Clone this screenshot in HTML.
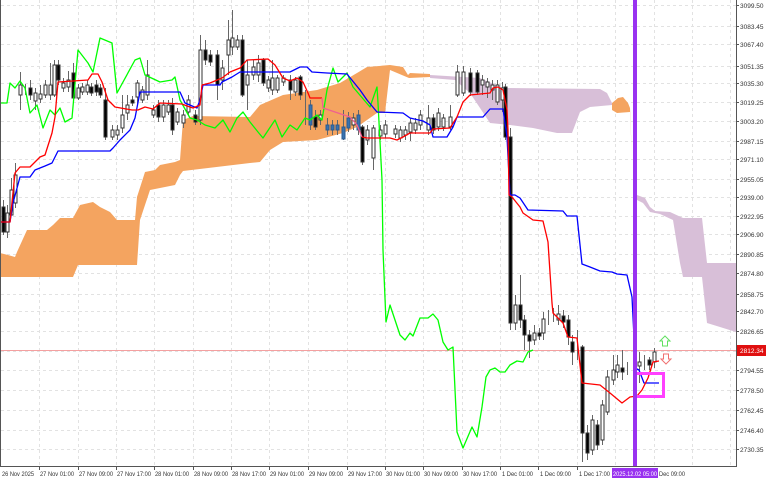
<!DOCTYPE html>
<html><head><meta charset="utf-8"><style>
html,body{margin:0;padding:0;background:#fff;width:768px;height:480px;overflow:hidden}
svg{display:block;font-family:"Liberation Sans",sans-serif}
</style></head><body>
<svg width="768" height="480" viewBox="0 0 768 480" xmlns="http://www.w3.org/2000/svg">
<rect width="768" height="480" fill="#fff"/>
<g stroke="#e2e2e2" stroke-width="1" stroke-dasharray="3,3">
<path d="M1 5.5H736M1 26.5H736M1 44.5H736M1 66.5H736M1 83.5H736M1 102.5H736M1 121.5H736M1 141.5H736M1 159.5H736M1 179.5H736M1 197.5H736M1 216.5H736M1 234.5H736M1 254.5H736M1 273.5H736M1 294.5H736M1 311.5H736M1 331.5H736M1 351.5H736M1 370.5H736M1 390.5H736M1 410.5H736M1 430.5H736M1 449.5H736"/>
<path d="M39.5 0V466M78.5 0V466M116.5 0V466M154.5 0V466M193.5 0V466M231.5 0V466M269.5 0V466M308.5 0V466M347.5 0V466M385.5 0V466M423.5 0V466M462.5 0V466M500.5 0V466M538.5 0V466M577.5 0V466M615.5 0V466M654.5 0V466M692.5 0V466M730.5 0V466"/>
</g>
<polygon fill="#f4a460" points="0,253 8,255 15,257 17,252 27,230 47,230 53,225 60,218 73,218 80,205 93,202 100,207 110,212 117,220 135,220 137,197 145,172 155,170 160,165 175,162 180,160 183,120 193,116 250,117 260,105 283,95 317,90 340,83 357,73 367,67 390,65 403,67 408,75 410,73 430,74 430,77 409,78 390,70 385,113 377,113 357,127 343,133 317,140 283,142 270,150 260,162 250,163 183,171 180,175 175,185 150,190 140,220 137,265 78,265 73,277 0,277"/>
<polygon fill="#d8bfd8" points="430,75 480,78 503,88 600,89 607,93 612,103 612,105 590,107 580,112 572,133 557,133 533,128 510,125 490,123 470,93 455,80 430,78"/>
<polygon fill="#f4a460" points="612,103 618,98 623,97 628,103 630,108 632,160 630,112 617,113 612,110"/>
<polygon fill="#d8bfd8" points="637,195 645,198 650,207 655,211 670,212 683,218 702,218 707,263 736,263 736,332 720,327 707,323 702,277 683,277 680,263 673,220 660,214 650,212 643,203 637,200"/>
<line x1="0" y1="350.5" x2="736" y2="350.5" stroke="#f4a0a0" stroke-width="1"/>
<g stroke="#666" stroke-width="1">
<path d="M3.5 200V235M7.5 205V238M11.5 178V215M15.5 163V208M20.5 72V110M25.5 84V95M30.5 80V100M35.5 88V110M40.5 85V103M45.5 80V98M50.5 63V100M54.5 60V97M58.5 60V85M63.5 78V92M68.5 71V92M73.5 63V100M78.5 84V100M82.5 83V95M87.5 80V95M91.5 83V96M96.5 80V96M100.5 84V98M105.5 88V140M112.5 125V140M117.5 125V140M122.5 95V133M127.5 95V120M132.5 96V106M137.5 80V105M142.5 86V103M147.5 60V100M153.5 105V118M158.5 100V122M163.5 100V122M168.5 100V115M172.5 98V135M177.5 108V125M183.5 110V128M188.5 95V115M195.5 110V125M200.5 35V125M205.5 40V65M210.5 50V66M217.5 50V100M222.5 60V90M228.5 20V75M232.5 10V55M237.5 35V50M242.5 35V97M247.5 60V110M253.5 60V80M258.5 55V82M263.5 58V86M268.5 76V92M272.5 60V95M277.5 75V93M283.5 75V86M290.5 75V100M295.5 77V96M300.5 75V100M305.5 90V125M310.5 100V130M315.5 110V130M320.5 110V125M327.5 118V135M332.5 120V135M337.5 120V135M343.5 110V140M348.5 112V132M353.5 113V130M358.5 110V135M362.5 125V165M367.5 125V145M373.5 125V170M380.5 125V140M385.5 120V138M395.5 125V138M400.5 126V142M405.5 126V140M410.5 118V141M415.5 118V134M420.5 110V130M428.5 105V135M433.5 114V134M438.5 108V131M443.5 114V131M450.5 105V130M457.5 65V97M463.5 66V96M470.5 68V96M477.5 70V95M482.5 75V95M487.5 78V98M492.5 80V100M497.5 80V105M502.5 82V112M505.5 84V140M510.5 128V330M515.5 295V330M520.5 275V328M524.5 315V350M529.5 330V358M534.5 325V345M539.5 328V340M543.5 312V340M548.5 310V325M553.5 308V322M558.5 305V325M563.5 310V328M568.5 315V345M572.5 335V365M577.5 330V360M582.5 345V462M587.5 425V460M592.5 415V455M597.5 420V450M602.5 400V445M607.5 370V415M613.5 355V385M617.5 355V378M622.5 350V380M627.5 362V375M639.5 352V383M644.5 355V370M649.5 357V370M654.5 348V368"/>
</g>
<g stroke="#333" stroke-width="1">
<g fill="#000">
<rect x="2" y="207" width="3" height="25"/><rect x="29" y="88" width="3" height="7"/><rect x="57" y="65" width="3" height="15"/><rect x="72" y="73" width="3" height="25"/><rect x="90" y="87" width="3" height="6"/><rect x="95" y="85" width="3" height="7"/><rect x="99" y="88" width="3" height="7"/><rect x="104" y="100" width="3" height="37"/><rect x="131" y="100" width="3" height="3"/><rect x="157" y="105" width="3" height="12"/><rect x="171" y="105" width="3" height="25"/><rect x="194" y="115" width="3" height="7"/><rect x="204" y="50" width="3" height="10"/><rect x="209" y="55" width="3" height="7"/><rect x="216" y="55" width="3" height="30"/><rect x="241" y="40" width="3" height="55"/><rect x="262" y="60" width="3" height="23"/><rect x="289" y="80" width="3" height="10"/><rect x="299" y="77" width="3" height="18"/><rect x="314" y="117" width="3" height="10"/><rect x="361" y="127" width="3" height="35"/><rect x="432" y="118" width="3" height="12"/><rect x="469" y="73" width="3" height="19"/><rect x="476" y="73" width="3" height="19"/><rect x="504" y="87" width="3" height="50"/><rect x="509" y="137" width="3" height="186"/><rect x="519" y="305" width="3" height="15"/><rect x="523" y="320" width="3" height="15"/><rect x="528" y="335" width="3" height="6"/><rect x="538" y="333" width="3" height="3"/><rect x="562" y="316" width="3" height="6"/><rect x="567" y="320" width="3" height="17"/><rect x="571" y="342" width="3" height="10"/><rect x="581" y="347" width="3" height="86"/><rect x="586" y="433" width="3" height="20"/><rect x="596" y="425" width="3" height="20"/><rect x="621" y="368" width="3" height="4"/><rect x="648" y="360" width="3" height="5"/>
</g>
<g fill="#3872b0" stroke="#2a5a90">
<rect x="309" y="105" width="3" height="20"/><rect x="326" y="125" width="3" height="5"/><rect x="331" y="125" width="3" height="5"/><rect x="336" y="125" width="3" height="5"/><rect x="342" y="127" width="3" height="12"/><rect x="347" y="118" width="3" height="10"/><rect x="357" y="115" width="3" height="15"/>
</g>
<g fill="#fff">
<rect x="6" y="213" width="3" height="19"/><rect x="10" y="190" width="3" height="25"/><rect x="14" y="175" width="3" height="28"/><rect x="19" y="85" width="3" height="10"/><rect x="34" y="93" width="3" height="8"/><rect x="39" y="94" width="3" height="5"/><rect x="44" y="85" width="3" height="10"/><rect x="49" y="85" width="3" height="10"/><rect x="53" y="65" width="3" height="30"/><rect x="62" y="83" width="3" height="5"/><rect x="67" y="80" width="3" height="7"/><rect x="77" y="88" width="3" height="10"/><rect x="81" y="87" width="3" height="5"/><rect x="86" y="85" width="3" height="7"/><rect x="111" y="130" width="3" height="7"/><rect x="116" y="130" width="3" height="5"/><rect x="121" y="115" width="3" height="13"/><rect x="126" y="105" width="3" height="8"/><rect x="136" y="83" width="3" height="14"/><rect x="141" y="90" width="3" height="10"/><rect x="146" y="75" width="3" height="20"/><rect x="152" y="110" width="3" height="5"/><rect x="162" y="105" width="3" height="12"/><rect x="167" y="105" width="3" height="7"/><rect x="176" y="112" width="3" height="10"/><rect x="182" y="115" width="3" height="8"/><rect x="187" y="100" width="3" height="12"/><rect x="199" y="50" width="3" height="70"/><rect x="221" y="68" width="3" height="12"/><rect x="227" y="40" width="3" height="15"/><rect x="231" y="38" width="3" height="9"/><rect x="236" y="40" width="3" height="7"/><rect x="246" y="75" width="3" height="10"/><rect x="252" y="67" width="3" height="8"/><rect x="257" y="63" width="3" height="12"/><rect x="267" y="80" width="3" height="8"/><rect x="271" y="78" width="3" height="12"/><rect x="276" y="78" width="3" height="12"/><rect x="282" y="78" width="3" height="4"/><rect x="294" y="80" width="3" height="12"/><rect x="319" y="115" width="3" height="5"/><rect x="352" y="118" width="3" height="7"/><rect x="366" y="130" width="3" height="10"/><rect x="372" y="128" width="3" height="30"/><rect x="379" y="130" width="3" height="6"/><rect x="384" y="125" width="3" height="9"/><rect x="394" y="129" width="3" height="5"/><rect x="399" y="130" width="3" height="8"/><rect x="404" y="130" width="3" height="5"/><rect x="409" y="123" width="3" height="9"/><rect x="414" y="123" width="3" height="7"/><rect x="419" y="115" width="3" height="10"/><rect x="427" y="118" width="3" height="12"/><rect x="437" y="113" width="3" height="14"/><rect x="442" y="118" width="3" height="9"/><rect x="449" y="117" width="3" height="10"/><rect x="456" y="72" width="3" height="23"/><rect x="462" y="72" width="3" height="21"/><rect x="481" y="80" width="3" height="5"/><rect x="486" y="82" width="3" height="5"/><rect x="491" y="85" width="3" height="5"/><rect x="496" y="85" width="3" height="17"/><rect x="501" y="88" width="3" height="12"/><rect x="514" y="305" width="3" height="18"/><rect x="533" y="333" width="3" height="7"/><rect x="542" y="319" width="3" height="14"/><rect x="557" y="314" width="3" height="6"/><rect x="591" y="420" width="3" height="30"/><rect x="601" y="405" width="3" height="35"/><rect x="606" y="377" width="3" height="35"/><rect x="612" y="370" width="3" height="10"/><rect x="616" y="365" width="3" height="7"/><rect x="638" y="362" width="3" height="4"/><rect x="653" y="352" width="3" height="10"/>
</g>
</g>
<g fill="none" stroke-width="1.3" stroke-linejoin="round">
<polyline stroke="#00ff00" points="0,103 7,103 10,83 15,88 20,81 25,88 30,113 37,105 43,128 50,110 55,115 60,108 65,122 72,118 78,50 88,63 93,72 100,38 112,43 117,93 135,60 140,58 145,75 160,82 172,80 175,77 180,100 190,118 197,120 205,125 215,128 223,120 230,132 237,118 243,112 250,122 258,132 263,138 275,120 282,137 290,125 297,130 305,118 310,120 317,115 322,120 327,90 333,68 338,82 347,73 353,87 370,107 377,87 378,103 382,180 383,250 386,322 390,305 400,335 405,340 410,333 413,336 420,318 428,318 433,314 438,320 443,342 448,350 453,347 457,432 463,448 472,427 477,437 482,407 486,377 490,370 495,368 500,372 505,372 510,365 517,361 523,362 528,352 533,350"/>
<polyline stroke="#0000ff" points="0,222 10,222 13,203 20,177 30,177 35,170 45,166 52,163 58,151 110,151 113,148 120,140 130,130 135,118 140,92 180,92 185,103 197,108 200,100 203,85 220,85 222,82 232,77 240,72 290,72 300,67 307,67 312,72 327,73 347,74 360,90 367,100 377,112 403,113 410,118 423,121 430,125 433,137 447,137 453,127 457,117 483,117 490,109 503,109 507,137 510,195 515,195 520,198 528,210 563,211 567,216 577,216 582,264 590,267 600,271 612,272 617,274 627,275 632,297 634,337 635,368 639,370 644,383 659,383"/>
<polyline stroke="#ff0000" points="0,222 10,222 15,173 20,167 30,167 40,157 45,155 52,133 55,117 58,82 88,80 92,74 98,74 102,82 108,100 115,107 132,110 138,110 145,107 153,109 160,103 182,104 187,106 193,108 200,105 202,85 210,83 222,78 230,72 240,68 247,60 268,59 275,65 283,78 290,81 297,78 303,82 308,93 310,98 322,98"/>
<polyline stroke="#f06090" points="322,98 323,108 350,117 357,125 362,137"/>
<polyline stroke="#ff0000" points="362,137 367,138 390,138 397,140 403,137 410,133 430,133 433,129 450,128 457,117 463,102 470,95 490,93 493,88 498,87 503,90 507,110 508,130 509,195 512,197 520,207 523,213 533,220 543,221 548,242 552,303 553,313 563,323 568,337 577,338 582,383 600,385 610,393 622,403 630,397 637,396 642,390 648,378 653,362 659,361"/>
</g>
<rect x="635.5" y="373.5" width="28" height="23" fill="none" stroke="#ff40ff" stroke-width="3"/>
<rect x="633" y="0" width="4" height="466" fill="#9932f0"/>
<path d="M665 336 L670 341 L667.5 341 L667.5 346 L662.5 346 L662.5 341 L660 341 Z" fill="#fff" stroke="#60e060" stroke-width="1"/>
<path d="M666 364 L671 359 L668.5 359 L668.5 354 L663.5 354 L663.5 359 L661 359 Z" fill="#fff" stroke="#f07070" stroke-width="1"/>
<path d="M0.5 0V466.5H736.5V0" fill="none" stroke="#555" stroke-width="1"/>
<g stroke="#555"><path d="M736 5.5h3M736 26.5h3M736 44.5h3M736 66.5h3M736 83.5h3M736 102.5h3M736 121.5h3M736 141.5h3M736 159.5h3M736 179.5h3M736 197.5h3M736 216.5h3M736 234.5h3M736 254.5h3M736 273.5h3M736 294.5h3M736 311.5h3M736 331.5h3M736 370.5h3M736 390.5h3M736 410.5h3M736 430.5h3M736 449.5h3"/>
<path d="M39.5 466v4M78.5 466v4M116.5 466v4M154.5 466v4M193.5 466v4M231.5 466v4M269.5 466v4M308.5 466v4M347.5 466v4M385.5 466v4M423.5 466v4M462.5 466v4M500.5 466v4M538.5 466v4M577.5 466v4"/></g>
<g font-size="6.5" fill="#333">
<text x="740" y="8">3099.50</text><text x="740" y="29">3083.45</text><text x="740" y="47">3067.40</text><text x="740" y="69">3051.35</text><text x="740" y="86">3035.30</text><text x="740" y="105">3019.25</text><text x="740" y="124">3003.20</text><text x="740" y="144">2987.15</text><text x="740" y="162">2971.10</text><text x="740" y="182">2955.05</text><text x="740" y="200">2939.00</text><text x="740" y="219">2922.95</text><text x="740" y="237">2906.90</text><text x="740" y="257">2890.85</text><text x="740" y="276">2874.80</text><text x="740" y="297">2858.75</text><text x="740" y="314">2842.70</text><text x="740" y="334">2826.65</text><text x="740" y="373">2794.55</text><text x="740" y="393">2778.50</text><text x="740" y="413">2762.45</text><text x="740" y="433">2746.40</text><text x="740" y="452">2730.35</text>
</g>
<rect x="737" y="345" width="29" height="11" fill="#e01010"/>
<text x="740" y="353" font-size="6.5" fill="#fff">2812.34</text>
<g font-size="6.5" fill="#333" lengthAdjust="spacingAndGlyphs">
<text x="2" y="476" textLength="32" lengthAdjust="spacingAndGlyphs">26 Nov 2025</text><text x="40" y="476" textLength="34" lengthAdjust="spacingAndGlyphs">27 Nov 01:00</text><text x="79" y="476" textLength="34" lengthAdjust="spacingAndGlyphs">27 Nov 09:00</text><text x="117" y="476" textLength="34" lengthAdjust="spacingAndGlyphs">27 Nov 17:00</text><text x="155" y="476" textLength="34" lengthAdjust="spacingAndGlyphs">28 Nov 01:00</text><text x="194" y="476" textLength="34" lengthAdjust="spacingAndGlyphs">28 Nov 09:00</text><text x="232" y="476" textLength="34" lengthAdjust="spacingAndGlyphs">28 Nov 17:00</text><text x="270" y="476" textLength="34" lengthAdjust="spacingAndGlyphs">29 Nov 01:00</text><text x="309" y="476" textLength="34" lengthAdjust="spacingAndGlyphs">29 Nov 09:00</text><text x="348" y="476" textLength="34" lengthAdjust="spacingAndGlyphs">29 Nov 17:00</text><text x="386" y="476" textLength="34" lengthAdjust="spacingAndGlyphs">30 Nov 01:00</text><text x="424" y="476" textLength="34" lengthAdjust="spacingAndGlyphs">30 Nov 09:00</text><text x="463" y="476" textLength="34" lengthAdjust="spacingAndGlyphs">30 Nov 17:00</text><text x="502" y="476" textLength="31" lengthAdjust="spacingAndGlyphs">1 Dec 01:00</text><text x="540" y="476" textLength="31" lengthAdjust="spacingAndGlyphs">1 Dec 09:00</text><text x="579" y="476" textLength="31" lengthAdjust="spacingAndGlyphs">1 Dec 17:00</text><text x="659" y="476" textLength="26" lengthAdjust="spacingAndGlyphs">Dec 09:00</text>
</g>
<rect x="612" y="468" width="46" height="10" fill="#9932f0"/>
<text x="613" y="476" font-size="6.5" fill="#fff" textLength="44" lengthAdjust="spacingAndGlyphs">2025.12.02 05:00</text>
</svg>
</body></html>
